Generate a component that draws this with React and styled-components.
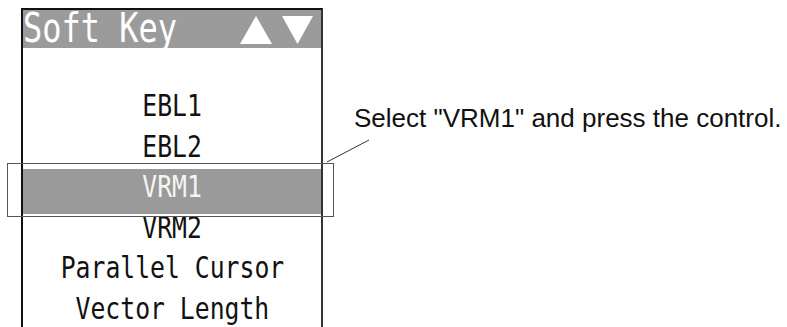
import React from "react";
import styled, { createGlobalStyle } from "styled-components";

const GlobalStyle = createGlobalStyle`
  html, body {
    margin: 0;
    padding: 0;
    background: #fff;
  }
  body {
    width: 787px;
    height: 327px;
    overflow: hidden;
  }
`;

const items = ["EBL1", "EBL2", "VRM1", "VRM2", "Parallel Cursor", "Vector Length"];
const selected = "VRM1";

const App = () => {
  return (
    <Page>
      <GlobalStyle />
      <Panel>
        <Header>
          <HeaderTitle>Soft Key</HeaderTitle>
          <Arrows width="73" height="28" viewBox="0 0 73 28">
            <polygon points="0,28 16,0 32,28" fill="#fff" />
            <polygon points="42,0 73,0 57.5,28" fill="#fff" />
          </Arrows>
        </Header>
        <List>
          {items.map((item) => (
            <Row key={item} $active={item === selected}>
              <Label>{item}</Label>
            </Row>
          ))}
        </List>
      </Panel>
      <Caption>Select "VRM1" and press the control.</Caption>

      <Highlight />
      <Leader width="50" height="30" viewBox="0 0 50 30">
        <line x1="2" y1="24" x2="44" y2="2" stroke="#333" strokeWidth="1" />
      </Leader>
    </Page>
  );
};

const Page = styled.div`
  position: relative;
  display: flex;
  align-items: flex-start;
  width: 787px;
  height: 327px;
  overflow: hidden;
`;

const Panel = styled.div`
  box-sizing: border-box;
  margin: 8px 0 0 21px;
  width: 302px;
  height: 330px;
  border: 2px solid #111;
  border-bottom: none;
  border-right-color: #333;
  flex-shrink: 0;
`;

const Header = styled.div`
  display: flex;
  align-items: flex-start;
  justify-content: space-between;
  height: 38px;
  background: #9b9b9b;
`;

const HeaderTitle = styled.span`
  display: inline-block;
  font-family: "DejaVu Sans Mono", monospace;
  font-size: 40px;
  line-height: 38px;
  margin-top: -1px;
  color: #fff;
  white-space: nowrap;
  transform: scaleX(0.8);
  transform-origin: left center;
`;

const Arrows = styled.svg`
  margin: 6px 8px 0 0;
  flex-shrink: 0;
`;

const List = styled.div`
  padding-top: 38px;
`;

const Row = styled.div`
  position: relative;
  height: 40.5px;
  display: flex;
  justify-content: center;
  color: ${(p) => (p.$active ? "#f4f4f4" : "#111")};

  &::before {
    content: "";
    display: ${(p) => (p.$active ? "block" : "none")};
    position: absolute;
    left: 0;
    right: 0;
    top: 2px;
    bottom: -6px;
    background: #9a9a9a;
  }
`;

const Label = styled.span`
  position: relative;
  display: inline-block;
  font-family: "DejaVu Sans Mono", monospace;
  font-size: 30px;
  line-height: 40px;
  white-space: pre;
  transform: scaleX(0.825);
`;

const Caption = styled.div`
  margin: 105px 0 0 31px;
  font-family: "Liberation Sans", Arial, sans-serif;
  font-size: 26px;
  line-height: 26px;
  color: #111;
  white-space: nowrap;
`;

const Highlight = styled.div`
  position: absolute;
  left: 7px;
  top: 163px;
  width: 327px;
  height: 54px;
  box-sizing: border-box;
  border: 1px solid #555;
`;

const Leader = styled.svg`
  position: absolute;
  left: 325px;
  top: 138px;
`;

export default App;
